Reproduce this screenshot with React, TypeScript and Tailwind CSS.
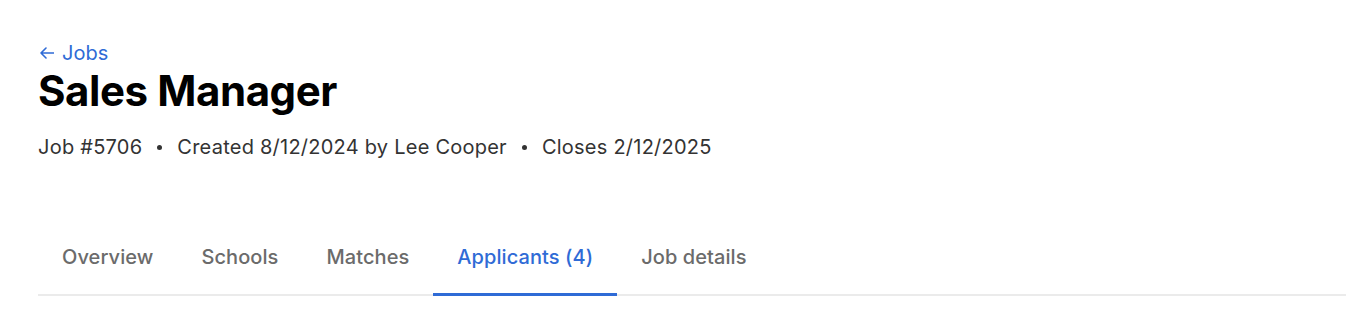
const tabs = [
  { label: "Overview", active: false },
  { label: "Schools", active: false },
  { label: "Matches", active: false },
  { label: "Applicants (4)", active: true },
  { label: "Job details", active: false },
];

export default function App() {
  return (
    <div
      className="min-h-[322px] bg-white pl-[38px] pt-[41px] text-[#111]"
      style={{ fontFamily: "Inter, 'Liberation Sans', sans-serif" }}
    >
      {/* Back link */}
      <a href="#" className="flex items-center gap-[8px] text-[20px] leading-[24px] text-[#2f6bd6]">
        <svg
          className="ml-[2px] h-[12px] w-[14px]"
          viewBox="0 0 14 12"
          fill="none"
          stroke="currentColor"
          strokeWidth={1.6}
          strokeLinecap="round"
          strokeLinejoin="round"
        >
          <path d="M1 6h12.5M6 1 1 6l5 5" />
        </svg>
        <span>Jobs</span>
      </a>

      <h1 className="mt-[2px] text-[42px] font-bold leading-[48px] tracking-[-0.01em] text-black">
        Sales Manager
      </h1>

      <div className="mt-[20px] flex items-center text-[20px] leading-[24px] tracking-[0.012em] text-[#333]">
        <span>Job #5706</span>
        <span className="mx-[15px] h-[5px] w-[5px] rounded-full bg-[#333]" />
        <span>Created 8/12/2024 by Lee Cooper</span>
        <span className="mx-[15px] h-[5px] w-[5px] rounded-full bg-[#333]" />
        <span>Closes 2/12/2025</span>
      </div>

      {/* Tabs */}
      <nav className="mt-[86px] flex border-b-2 border-[#ebebeb]">
        {tabs.map((tab) => (
          <a
            key={tab.label}
            href="#"
            className={
              tab.active
                ? "-mb-[2px] border-b-[3px] border-[#2f6bd6] px-6 pb-[24px] text-[20px] font-medium leading-[24px] tracking-[0.004em] text-[#2f6bd6]"
                : "-mb-[2px] border-b-[3px] border-transparent px-6 pb-[24px] text-[20px] font-medium leading-[24px] tracking-[0.004em] text-[#6b6b6b]"
            }
          >
            {tab.label}
          </a>
        ))}
      </nav>
    </div>
  );
}
